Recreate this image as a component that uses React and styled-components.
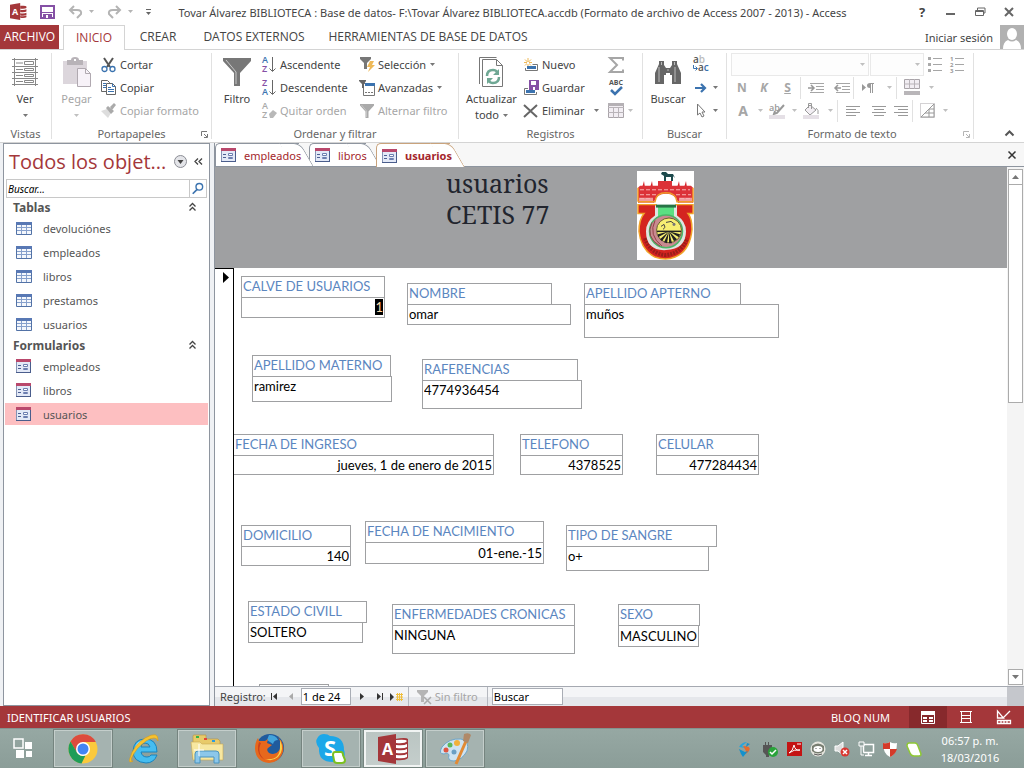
import React, { useEffect, useRef } from 'react';
import styled, { createGlobalStyle, css } from 'styled-components';

const GlobalStyle = createGlobalStyle`
  * { box-sizing: border-box; }
  body { margin: 0; background: #fff; }
  body, button, input, select {
    font-family: "Noto Sans", "Open Sans", sans-serif;
    font-size: 11px;
    color: #444;
  }
  button { background: none; border: 0; padding: 0; margin: 0; white-space: nowrap; }
  svg { display: block; flex: none; overflow: visible; }
`;

const Window = styled.div`
  display: flex;
  flex-direction: column;
  height: 100vh;
  overflow: hidden;
`;

/* ---------- title bar ---------- */

const TitleBar = styled.header`
  display: flex;
  align-items: center;
  flex: none;
  height: 25px;
  padding: 0 8px 0 10px;
`;

const QuickAccess = styled.div`
  display: flex;
  align-items: center;
  gap: 13px;
  width: 155px;
  flex: none;
  margin-top: -2px;
`;

const WindowTitle = styled.h1`
  flex: 1;
  margin: 0;
  font-size: 11px;
  font-weight: 400;
  line-height: 24px;
  text-align: center;
  white-space: nowrap;
`;

const WindowButtons = styled.div`
  display: flex;
  align-items: center;
  gap: 15px;
  margin: -2px 0 0 55px;

  button {
    display: flex;
    justify-content: center;
    width: 14px;
  }

  b { font-size: 13px; }
`;

/* ---------- ribbon tabs ---------- */

const TabStrip = styled.nav`
  display: flex;
  align-items: stretch;
  flex: none;
  height: 25px;
  border-bottom: 1px solid #d4d4d4;
`;

const RibbonTab = styled.button`
  width: ${(p) => p.$width}px;
  font-family: "Open Sans", sans-serif;
  font-size: 12px;
  line-height: 24px;
  text-align: center;

  ${(p) => p.$file && css`
    background: #a4373a;
    color: #fff;
    margin-right: 4px;
  `}

  ${(p) => p.$active && css`
    border: 1px solid #d4d4d4;
    border-bottom: 0;
    background: #fff;
    color: #a4373a;
    margin-bottom: -1px;
  `}
`;

const SignIn = styled.button`
  display: flex;
  align-items: center;
  gap: 7px;
  margin-left: auto;
`;

/* ---------- ribbon ---------- */

const Ribbon = styled.section`
  display: flex;
  flex: none;
  height: 93px;
  padding-top: 3px;
  border-bottom: 1px solid #d4d4d4;
`;

const Group = styled.div`
  display: flex;
  flex-direction: column;
  width: ${(p) => p.$width}px;
  height: 86px;
  padding-left: ${(p) => p.$pad || 0}px;
  border-right: 1px solid #e1e1e1;
`;

const GroupBody = styled.div`
  display: flex;
  flex: none;
  height: 71px;
`;

const GroupLabel = styled.div`
  display: flex;
  justify-content: center;
  position: relative;
  flex: none;
  height: 20px;
  line-height: 20px;
  color: #666;

  svg {
    position: absolute;
    right: 3px;
    top: 7px;
  }
`;

const Column = styled.div`
  display: flex;
  flex-direction: column;
  flex: none;
  height: 71px;
  width: ${(p) => (p.$width ? `${p.$width}px` : 'auto')};
`;

const BigButton = styled.button`
  display: grid;
  grid-template-rows: 38px 16px 16px;
  justify-items: center;
  align-items: center;
  flex: none;
  width: ${(p) => p.$width}px;
  height: 71px;
  line-height: 16px;
  color: ${(p) => (p.$off ? '#a6a6a6' : '#444')};
`;

const ArrowLine = styled.span`
  display: flex;
  align-items: center;
  gap: 4px;
`;

const SmallButton = styled.button`
  display: flex;
  align-items: center;
  gap: 4px;
  height: 23px;
  color: ${(p) => (p.$off ? '#a6a6a6' : '#444')};
`;

const FormatRow = styled.div`
  display: flex;
  align-items: center;
  height: 23px;
`;

const FormatButton = styled.button`
  display: flex;
  align-items: center;
  justify-content: center;
  width: ${(p) => p.$width || 22}px;
  height: 22px;
  font-size: ${(p) => p.$size || 12}px;
  font-weight: 700;
  font-style: ${(p) => (p.$italic ? 'italic' : 'normal')};
  text-decoration: ${(p) => (p.$underline ? 'underline' : 'none')};
  color: #a6a6a6;
`;

const Rule = styled.span`
  width: 1px;
  height: 22px;
  background: #e1e1e1;
`;

const Combo = styled.div`
  position: relative;
  width: ${(p) => p.$width}px;
  margin-right: 1px;

  select {
    display: block;
    appearance: none;
    width: 100%;
    height: 23px;
    border: 1px solid #e1e1e1;
    border-radius: 0;
    background: #fdfdfd;
  }

  svg {
    position: absolute;
    right: 4px;
    top: 10px;
  }
`;

const Collapse = styled.button`
  margin: auto 10px 6px auto;
`;

/* ---------- navigation pane ---------- */

const Workspace = styled.main`
  display: flex;
  flex: 1;
  min-height: 0;
  padding-left: 3px;
  background: #eff1f4;
`;

const Pane = styled.aside`
  display: flex;
  flex-direction: column;
  width: 207px;
  flex: none;
  margin-right: 4px;
  padding: 0 1px;
  border: 1px solid #8e959f;
  background: #fff;
`;

const PaneHeader = styled.div`
  display: flex;
  align-items: center;
  height: 35px;
  padding: 0 5px 0 4px;

  h2 {
    flex: 1;
    margin: 0;
    font: 400 20px/34px "Open Sans", sans-serif;
    color: #a4373a;
    white-space: nowrap;
  }

  button + button { margin-left: 7px; }
`;

const SearchBox = styled.label`
  display: flex;
  align-items: center;
  height: 19px;
  margin: 0 1px;
  border: 1px solid #c8c8c8;

  input {
    flex: 1;
    min-width: 0;
    padding: 0 1px;
    border: 0;
    outline: 0;
    font-size: 10px;
    font-style: italic;
    color: #000;
  }

  input::placeholder { color: #000; opacity: 1; }

  svg {
    padding: 1px;
    border-left: 1px solid #c8c8c8;
  }
`;

const PaneGroup = styled.button`
  display: flex;
  align-items: center;
  justify-content: space-between;
  height: 18px;
  padding: 0 12px 0 8px;
  font-size: 12px;
  font-weight: 700;
  color: #555;
`;

const PaneList = styled.ul`
  margin: 0;
  padding: 0;
  list-style: none;

  li { padding: 1px 0; }
`;

const PaneItem = styled.button`
  display: flex;
  align-items: center;
  gap: 11px;
  width: 100%;
  height: 22px;
  padding-left: 11px;
  color: #555;
  background: ${(p) => (p.$selected ? '#fdbfc1' : 'transparent')};
`;

/* ---------- document area ---------- */

const Documents = styled.div`
  display: flex;
  flex-direction: column;
  flex: 1;
  min-width: 0;
  border-left: 1px solid #8e959f;
`;

const DocumentTabs = styled.div`
  display: flex;
  align-items: stretch;
  flex: none;
  height: 24px;
  padding-right: 8px;
  background: #f7f7f7;
  border-bottom: 1px solid #8e959f;
`;

const DocumentTab = styled.button`
  position: relative;
  z-index: ${(p) => p.$order};
  display: flex;
  align-items: center;
  gap: 8px;
  width: ${(p) => p.$width}px;
  margin-right: 10px;
  padding-left: 5px;
  border: 1px solid ${(p) => (p.$active ? '#c9a37c' : '#8e959f')};
  border-width: 1px 0 0 1px;
  border-radius: 5px 0 0 0;
  background: #fff;
  font-weight: ${(p) => (p.$active ? 700 : 400)};
  color: #a4262c;
  margin-bottom: ${(p) => (p.$active ? -1 : 0)}px;

  &::after {
    content: '';
    position: absolute;
    z-index: -1;
    top: -1px;
    right: -8px;
    bottom: 0;
    width: 20px;
    border: 1px solid ${(p) => (p.$active ? '#c9a37c' : '#8e959f')};
    border-width: 1px 1px 0 0;
    border-radius: 0 7px 0 0;
    background: #fff;
    transform: skewX(30deg);
  }
`;

const CloseDocument = styled.button`
  margin-left: auto;
`;

const FormArea = styled.div`
  display: flex;
  flex: 1;
  min-height: 0;
  background: #fff;
`;

const FormView = styled.div`
  display: flex;
  flex-direction: column;
  flex: 1;
  min-width: 0;
`;

const FormHeader = styled.div`
  display: flex;
  align-items: flex-start;
  flex: none;
  height: 101px;
  padding: 1px 0 0 231px;
  background: #9fa0a2;

  h2 {
    width: 191px;
    margin: 0;
    font: 400 25px/31px "Noto Serif", "Droid Serif", "Liberation Serif", serif;
    color: #22252e;
  }

  svg { margin-top: 3px; }
`;

const FormDetail = styled.div`
  display: flex;
  flex: 1;
  min-height: 0;
`;

const RecordSelector = styled.div`
  width: 19px;
  flex: none;
  padding: 3px 0 0 8px;
  border-top: 1px solid #000;
  border-right: 1px solid #000;
`;

const Record = styled.form`
  flex: 1;
  min-width: 0;
  padding-top: 8px;
  overflow: hidden;
`;

const FieldRow = styled.div`
  display: flex;
  align-items: flex-start;
  height: ${(p) => p.$height}px;
`;

const Field = styled.div`
  display: flex;
  flex-direction: column;
  flex: none;
  margin: ${(p) => p.$drop || 0}px 0 0 ${(p) => p.$before}px;
  font-family: Lato, sans-serif;

  label {
    width: ${(p) => p.$label}px;
    height: 22px;
    padding: 0 1px;
    border: 1px solid #9fa0a2;
    font-size: 13px;
    line-height: 18px;
    color: #5b86bf;
    white-space: nowrap;
  }

  input {
    width: ${(p) => p.$value}px;
    height: ${(p) => p.$height || 21}px;
    margin-top: -1px;
    padding: 0 1px ${(p) => (p.$height > 24 ? p.$height - 20 : 1)}px;
    border: 1px solid #9fa0a2;
    border-radius: 0;
    outline: 0;
    font-family: Lato, sans-serif;
    font-size: 13px;
    text-align: ${(p) => (p.$right ? 'right' : 'left')};
    color: #000;
  }

  input::selection { background: #000; color: #ffd9a8; }
`;

const ScrollBar = styled.div`
  display: flex;
  flex-direction: column;
  width: 17px;
  flex: none;
  padding: 2px 1px 1px;
  background: #f4f4f4;
`;

const ScrollButton = styled.button`
  display: flex;
  align-items: center;
  justify-content: center;
  flex: none;
  height: 16px;
  border: 1px solid #ababab;
  background: #fff;
`;

const ScrollTrack = styled.div`
  flex: 1;
`;

const ScrollThumb = styled.div`
  height: 45%;
  border: 1px solid #ababab;
  border-top: 0;
  background: #fff;
`;

const RecordBar = styled.div`
  display: flex;
  align-items: center;
  flex: none;
  height: 20px;
  padding-left: 5px;
  border-top: 1px solid #a5a9b1;
  background: linear-gradient(#f4f5f7 50%, #e5e7eb 50%);

  input {
    height: 17px;
    padding: 0 1px;
    border: 1px solid #a9adb5;
    border-radius: 0;
    color: #000;
  }
`;

const RecordNumber = styled.input`
  width: 50px;
  margin: 0 3px 0 1px;
`;

const RecordSearch = styled.input`
  width: 71px;
  margin-left: 4px;
`;

const RecordButton = styled.button`
  display: flex;
  justify-content: center;
  width: 17px;
`;

const NoFilter = styled.button`
  display: flex;
  align-items: center;
  gap: 3px;
  height: 19px;
  width: 80px;
  margin-left: 3px;
  padding-left: 8px;
  border: 1px solid #b5b8bf;
  border-width: 0 1px;
  color: #a6a6a6;
`;

const BarCorner = styled.span`
  width: 17px;
  height: 19px;
  margin-left: auto;
  background: #c5c7cc;
`;

/* ---------- status bar ---------- */

const StatusBar = styled.footer`
  display: flex;
  align-items: center;
  flex: none;
  height: 22px;
  padding: 0 1px 0 7px;
  background: #a4373a;
  color: #fff;
`;

const NumLock = styled.span`
  margin-left: auto;
  padding-right: 19px;
`;

const ViewButton = styled.button`
  display: flex;
  align-items: center;
  justify-content: center;
  width: 38px;
  height: 22px;
  background: ${(p) => (p.$active ? '#87292c' : 'none')};
`;

/* ---------- taskbar ---------- */

const Taskbar = styled.div`
  display: flex;
  align-items: stretch;
  flex: none;
  height: 40px;
  border-top: 1px solid #83938f;
  background: linear-gradient(#96a8a3, #8b9d98);
`;

const StartButton = styled.button`
  display: flex;
  align-items: center;
  width: 53px;
  padding-left: 13px;
`;

const TaskButton = styled.button`
  display: flex;
  align-items: center;
  justify-content: center;
  width: 60px;
  margin-right: 2px;
  border: 1px solid transparent;

  ${(p) => p.$open && css`
    border-color: #c4cecb;
    background: #a5b3b0;
    outline: 1px solid #75847f;
    outline-offset: -1px;
    box-shadow: inset 0 0 0 1px #c4cecb;
  `}

  ${(p) => p.$active && css`
    background: linear-gradient(#bac5c2, #c5cecc);
    box-shadow: inset 0 0 0 2px #f1f4f3;
  `}
`;

const Tray = styled.div`
  display: flex;
  align-items: center;
  gap: 8px;
  margin-left: auto;
`;

const Clock = styled.time`
  display: flex;
  flex-direction: column;
  justify-content: center;
  align-items: center;
  width: 102px;
  padding-right: 6px;
  line-height: 17px;
  color: #fff;
`;

/* ---------- drawings ---------- */

const Svg = ({ w = 16, h = 16, box, children, ...rest }) => (
  <svg width={w} height={h} viewBox={box || `0 0 ${w} ${h}`} fill="none" aria-hidden="true" {...rest}>
    {children}
  </svg>
);

const Arrow = ({ color = '#777' }) => (
  <Svg w={5} h={3}><path d="M0 0h5L2.500 3z" fill={color} /></Svg>
);

const AccessLogo = ({ size }) => (
  <Svg w={size} h={size} box="0 0 30 30">
    <path d="M17 4h9q4 0 4 3v16q0 3-4 3h-9z" fill="#fff" />
    <path d="M18 5q10-1 11 1v3q-3 2-11 1zM18 12q8 1 11-1v4q-3 2-11 1zM18 18q8 1 11-1v4q-3 2-11 1zM18 23q8 1 11-1v3q-3 2-11 1z" fill="#a4373a" />
    <path d="M0 3 18 0v30L0 27z" fill="#a4373a" />
    <text x="3.500" y="21" fontFamily="Open Sans, sans-serif" fontWeight="700" fontSize="16" fill="#fff">A</text>
  </Svg>
);

// desktop size: the discs are white with red gaps
const AccessAppIcon = () => (
  <Svg w={30} h={30}>
    <path d="M17 5q11-2 13 0v19q-3 3-13 2z" fill="#a4373a" />
    <path d="M18 6q10-1 11 1-2 3-11 2zM18 11q8 1 11-1v3q-3 2-11 1zM18 16q8 1 11-1v3q-3 2-11 1zM18 21q8 1 11-1v3q-3 2-11 1z" fill="#fff" />
    <path d="M0 3 18 0v30L0 27z" fill="#a4373a" />
    <text x="4" y="21" fontFamily="Open Sans, sans-serif" fontWeight="700" fontSize="16" fill="#fff">A</text>
  </Svg>
);

const SaveIcon = () => (
  <Svg w={15} h={14}>
    <path d="M1 1h13v12H1z" fill="#fff" stroke="#8550a5" strokeWidth="2" />
    <path d="M2 7h11v1H2zM3 9h9v4H3z" fill="#8550a5" />
    <path d="M6 10h2v3H6z" fill="#fff" />
  </Svg>
);

const UndoIcon = ({ flip }) => (
  <Svg w={26} h={14}>
    <g transform={flip ? 'translate(15 0) scale(-1 1)' : undefined} stroke="#b4b4b4" strokeWidth="2">
      <path d="M6 1 2 5l4 4M2 5h7q5 0 4 4l-4 4" />
    </g>
    <path d="M21 5h5l-2.500 3z" fill="#b4b4b4" />
  </Svg>
);

const ViewIcon = () => (
  <Svg w={26} h={28}>
    <path d="M2.500 0v28M23.500 0v28M0 1.500h26M0 8.500h26M0 14.500h26M0 20.500h26M0 26.500h26" stroke="#888" />
    <path d="M4 5h7M4 11.500h7M4 17.500h7M4 23.500h7" stroke="#888" />
    <path d="M12.500 3.500h9v3h-9zM12.500 10.500h9v2h-9zM12.500 16.500h9v2h-9zM12.500 22.500h9v2h-9z" stroke="#888" fill="#fff" />
  </Svg>
);

const PasteIcon = () => (
  <Svg w={28} h={30}>
    <path d="M0 4h24v23H0z" fill="#dcd6dc" />
    <path d="M4 8V3h4q0-3 4-3t4 3h4v5z" fill="#b8b3b8" />
    <path d="M11 2h2v2h-2z" fill="#fff" />
    <path d="M14.500 11.500h8l5 5v13h-13z" fill="#f7f2f8" stroke="#b0a9b0" />
    <path d="M22.500 11.500v5h5" stroke="#b0a9b0" />
  </Svg>
);

const CutIcon = () => (
  <Svg w={15} h={16}>
    <path d="m3 1 6 9M12 1 6 10" stroke="#555" strokeWidth="2" />
    <circle cx="3.500" cy="12" r="2.500" stroke="#3b73af" strokeWidth="1.300" />
    <circle cx="11.500" cy="12" r="2.500" stroke="#3b73af" strokeWidth="1.300" />
  </Svg>
);

const CopyIcon = () => (
  <Svg w={15} h={15}>
    <path d="M.5.500h6l2 2v9h-8z" fill="#fff" stroke="#666" />
    <path d="M2 3.500h3M2 5.500h3M2 7.500h3" stroke="#3b73af" />
    <path d="M5.500 3.500h6l3 3v8h-9z" fill="#fff" stroke="#666" />
    <path d="M11.500 3.500v3h3M7 7.500h3M7 9.500h6M7 11.500h6" stroke="#3b73af" />
  </Svg>
);

const BrushIcon = () => (
  <Svg w={15} h={15}>
    <path d="M0 8 6 6l4 4-3 5z" fill="#ddd" />
    <path d="m5 5 2-2 6 5-3 3z" fill="#aaa" />
    <path d="m9 4 4-4 2 2-4 5z" fill="#aaa" />
  </Svg>
);

const FunnelIcon = ({ w, h, color }) => (
  <Svg w={w} h={h} box="0 0 28 28" preserveAspectRatio="none">
    <path d="M0 0h28v3L17 15v13h-6V15L0 3z" fill={color} />
    <path d="M3 2l10 12v12" stroke="#fff" strokeOpacity=".6" />
  </Svg>
);

const SortIcon = ({ top, bottom, topColor, bottomColor, arrow = true }) => (
  <Svg w={14} h={17}>
    <g fontFamily="Open Sans, sans-serif" fontSize="9" fontWeight="600">
      <text x="0" y="7" fill={topColor}>{top}</text>
      <text x="0" y="16" fill={bottomColor}>{bottom}</text>
    </g>
    {arrow
      ? <path d="M10.500 1v14M7.500 12.500l3 3 3-3" stroke="#666" />
      : <path d="m7 12 4-4 4 3-4 5H8z" fill="#b8b8b8" />}
  </Svg>
);

const SelectionIcon = () => (
  <Svg w={14} h={15}>
    <path d="M0 0h11v2L7 6v6H4V6L0 2z" fill="#777" />
    <path d="M10 4h4l-2 4h3l-7 7 2-5H7z" fill="#eeb958" />
  </Svg>
);

const AdvancedIcon = () => (
  <Svg w={14} h={16}>
    <path d="M3.500 3.500h11v12h-11z" fill="#fff" stroke="#777" />
    <path d="M5 3h10v3H5z" fill="#3b73af" />
    <path d="M-1 0h7v1L4 4v4H2V4L-1 1z" fill="#666" />
    <path d="M5 12h2v1H5zM8 12h2v1H8zM11 12h2v1h-2z" fill="#777" />
  </Svg>
);

const RefreshIcon = () => (
  <Svg w={25} h={30}>
    <path d="M.5 27V.5h17" stroke="#777" />
    <path d="M3.500 2.500h14l6 6v21h-20z" fill="#fff" stroke="#777" />
    <path d="M17.500 2.500v6h6" stroke="#777" />
    <path d="M8 19q0-6 6-6 3 0 4 2M20 20q0 6-6 6-3 0-4-2" stroke="#6fa894" strokeWidth="2.500" />
    <path d="M20 12v6h-6zM8 27v-6h6z" fill="#6fa894" />
  </Svg>
);

const NewIcon = () => (
  <Svg w={14} h={14}>
    <path d="M4 0v9M0 4.500h8M1 1.500l6 6M7 1.500l-6 6" stroke="#eeb958" />
    <path d="M3 4h2v2H3z" fill="#fff" />
    <path d="M8.500 6.500h5v6H1.500V10" stroke="#777" />
    <path d="M3 8h9v3H3z" fill="#3b73af" />
  </Svg>
);

const SaveRecordIcon = () => (
  <Svg w={14} h={16}>
    <path d="M4 8.500H.5v6h12V12" stroke="#777" />
    <path d="M2 10h9v3H2z" fill="#3b73af" />
    <path d="M5 0h10v10H5z" fill="#8550a5" />
    <path d="M7 1h5v4H7z" fill="#fff" />
    <path d="M9 7h2v3H9z" fill="#fff" />
  </Svg>
);

const DeleteIcon = () => (
  <Svg w={14} h={14}>
    <path d="m0 1 13 12M13 1 0 13" stroke="#666" strokeWidth="2" />
  </Svg>
);

const SigmaIcon = () => (
  <Svg w={16} h={16}>
    <path d="M15 3.500V1H2l7 7-7 7h13v-2.500" stroke="#a6a6a6" strokeWidth="2" />
  </Svg>
);

const SpellIcon = () => (
  <Svg w={16} h={17}>
    <text x="1" y="6" fontFamily="Open Sans, sans-serif" fontSize="7" fontWeight="700" fill="#555">ABC</text>
    <path d="m3 11 4 4 7-7" stroke="#3b73af" strokeWidth="2.500" />
  </Svg>
);

const GridIcon = ({ bar }) => (
  <Svg w={16} h={bar ? 17 : 15}>
    <path d={bar ? 'M.5.500h15v9H.5z' : 'M.5.500h15v14H.5z'} fill="#f2eef3" stroke="#a9a4a9" />
    <path d={bar ? 'M0 5h16M5.500 0v10M10.500 0v10' : 'M0 4.500h16M0 9.500h16M5.500 5v10M10.500 5v10'} stroke="#b9b4b9" />
    {bar ? <path d="M0 12h16v4H0z" fill="#b9b6b9" /> : <path d="M0 0h16v3H0z" fill="#b5b1b5" />}
  </Svg>
);

const BinocularsIcon = () => (
  <Svg w={26} h={24}>
    <path d="M4 4V1h5v4l2 3h4l2-3V1h5v3l4 9v11h-9v-9h-2v-2h-4v2H9v9H0V13z" fill="#666" />
    <path d="M4 7v15M20 7v15M6.500 2v3M19.500 2v3M12 10h2" stroke="#bbb" />
  </Svg>
);

const ReplaceIcon = () => (
  <Svg w={17} h={17}>
    <g fontFamily="Open Sans, sans-serif" fontSize="10" fontWeight="600">
      <text x="0" y="7" fill="#555">a<tspan fill="#bbb">b</tspan></text>
      <text x="5" y="15" fill="#555">a<tspan fill="#3b73af">c</tspan></text>
    </g>
    <path d="M.5 9v3.500H4M2.500 10.500l2 2-2 2" stroke="#3b73af" />
  </Svg>
);

const GotoIcon = () => (
  <Svg w={16} h={10}><path d="M2 5h10M8 1l4 4-4 4" stroke="#3b73af" strokeWidth="2.200" /></Svg>
);

const CursorIcon = () => (
  <Svg w={16} h={15}><path d="M4.500 1v11l2.500-2 2 4 2-1-2-4h3z" fill="#fff" stroke="#777" /></Svg>
);

const ListIcon = ({ numbered }) => (
  <Svg w={16} h={17}>
    <path d="M5 2.500h9M5 8.500h9M5 14.500h9" stroke="#a6a6a6" />
    {numbered ? (
      <g fontFamily="Open Sans, sans-serif" fontSize="6" fill="#999">
        <text x="0" y="5">1</text><text x="0" y="11">2</text><text x="0" y="17">3</text>
      </g>
    ) : <path d="M0 1h3v3H0zM0 7h3v3H0zM0 13h3v3H0z" fill="#aaa" />}
  </Svg>
);

const IndentIcon = ({ back }) => (
  <Svg w={16} h={12}>
    <path d="M2 1.500h14M8 4.500h8M8 7.500h8M2 10.500h14" stroke="#a6a6a6" />
    <path d={back ? 'M7 6H1M4 3 1 6l3 3' : 'M0 6h6M3 3l3 3-3 3'} stroke="#999" strokeWidth="1.500" />
  </Svg>
);

const ParagraphIcon = () => (
  <Svg w={12} h={10}>
    <path d="M0 1v7l4-3.500zM8 0h4v1h-1v9h-1V1H9v9H8V5q-3 0-3-2.500T8 0z" fill="#999" />
  </Svg>
);

const HighlightIcon = () => (
  <Svg w={16} h={16}>
    <text x="0" y="8" fontFamily="Open Sans, sans-serif" fontSize="9" fontWeight="600" fill="#999">ab</text>
    <path d="M15 2 8 10l-3 1 1-3" stroke="#999" strokeWidth="2" />
    <path d="M0 12h16v4H0z" fill="#e5e0e6" />
  </Svg>
);

const FillIcon = () => (
  <Svg w={16} h={16}>
    <path d="m7 2 6 5-6 5-5-5z" fill="#f2eef3" stroke="#999" />
    <path d="M5.500 5V.5h3V6M13 5q3 2 2 6" stroke="#999" />
    <path d="M0 12h16v4H0z" fill="#e5e0e6" />
  </Svg>
);

const alignLines = {
  left: 'M0 .5h14M0 3.500h10M0 6.500h14M0 9.500h10',
  center: 'M0 .5h14M2 3.500h10M0 6.500h14M2 9.500h10',
  right: 'M0 .5h14M4 3.500h10M0 6.500h14M4 9.500h10',
};

const AlignIcon = ({ kind }) => (
  <Svg w={14} h={10}><path d={alignLines[kind]} stroke="#999" /></Svg>
);

const ConditionalIcon = () => (
  <Svg w={15} h={15}>
    <path d="M.5.500h14v14H.5z" stroke="#a9a4a9" strokeDasharray="1 1" />
    <path d="M1 14 14 1v13zM5 10h9M9 6v8M9 6h5" stroke="#999" />
  </Svg>
);

const LauncherIcon = ({ color = '#777' }) => (
  <Svg w={7} h={7}><path d="M.5 5V.5H6M3 3l3 3M6.500 3v3.500H3" stroke={color} /></Svg>
);

const AvatarIcon = () => (
  <Svg w={24} h={24}>
    <path d="M0 0h24v24H0z" fill="#b1b1b1" />
    <ellipse cx="12" cy="9" rx="5" ry="6" fill="#fff" />
    <path d="M3 24q0-7 5-9 4 3 8 0 5 2 5 9z" fill="#fff" />
  </Svg>
);

const TableIcon = () => (
  <Svg w={16} h={13}>
    <path d="M.5.500h15v12H.5z" fill="#f4f7fc" stroke="#5272a6" />
    <path d="M0 0h16v3H0z" fill="#5878b4" />
    <path d="M1 5.500h14M1 8.500h14M5.500 3v9M10.500 3v9" stroke="#86a0cc" />
  </Svg>
);

const FormIcon = () => (
  <Svg w={15} h={14}>
    <path d="M.5.500h14v13H.5z" fill="#e3e9f7" stroke="#8593b5" />
    <path d="M0 13h15v1H0zM14 3h1v11h-1z" fill="#4a5d8c" />
    <path d="M0 0h15v3H0z" fill="#b9486c" />
    <path d="M2 6.500h3M2 9.500h3" stroke="#4c5f92" />
    <path d="M7.500 5.500h4v2h-4zM7.500 9.500h4v1h-4z" fill="#fff" stroke="#6c7fb0" />
  </Svg>
);

const MagnifierIcon = () => (
  <Svg w={17} h={17} box="-1 0 16 16">
    <circle cx="8.500" cy="6" r="3.800" stroke="#3b73af" strokeWidth="1.600" />
    <path d="m6 9-5 5" stroke="#3b73af" strokeWidth="2" />
  </Svg>
);

const DoubleUp = () => (
  <Svg w={7} h={8}><path d="m.5 3.500 3-3 3 3M.5 7.500l3-3 3 3" stroke="#444" strokeWidth="1.300" /></Svg>
);

const SchoolCrest = () => (
  <Svg w={57} h={89} box="0 0 57 90" preserveAspectRatio="none">
    <path d="M0 0h57v90H0z" fill="#fff" />
    <path d="M25 1h4l2 2h5l2 4-2-2v5h-2V6h-5v4h-2V5l-3-2z" fill="#1d4a4d" />
    <path d="M5 17l2-7 1 7M13 17l2-7 1 7M40 17l2-7 1 7M47 17l2-7 1 7" fill="#d8262c" />
    <path d="M21 10h14v6H21zM1 17l2-2h51l2 2v15H41q-2-9-12-9t-12 9H1z" fill="#dc3238" />
    <path d="M2 27h14v5H2zM42 27h13v5H42z" fill="#f0999b" />
    <path d="M3 19h50M3 24h16M39 24h15M3 28h12M43 28h11" stroke="#f7b5b5" strokeDasharray="4 2" />
    <path d="M1 31h17q1-9 11-9t11 9h16V17M1 31V17" stroke="#ef9a29" strokeWidth="1.500" />
    <path d="M1 34h18v10h20V34h17v9h-5q4 5 4 16-2 22-17 28-9 4-20 0Q4 80 2 61q0-12 5-18H1z" fill="#d42420" stroke="#f0a32a" strokeWidth="1.500" />
    <path d="M8 68q5 15 20 17 16-1 22-17" stroke="#9c1d1a" strokeWidth="4" strokeDasharray="2 1" />
    <path d="M18 35h22v10q9 6 9 16 0 18-20 19T9 61q0-10 9-16z" fill="#dfe5e2" />
    <path d="M21 35h16v12h-16z" fill="#5be082" />
    <path d="M19 34h20v3H19z" fill="#277346" />
    <circle cx="29" cy="61" r="16.500" fill="#c98a90" stroke="#4cb567" strokeWidth="1.500" />
    <path d="M15 52q-7 15 8 24M18 50q-7 15 7 26" stroke="#914048" />
    <circle cx="32" cy="60" r="12.500" fill="#f6ee72" stroke="#665f30" />
    <path d="M20 61h24" stroke="#222" strokeWidth="1.500" />
    <path d="M32 61 21 64v3zM32 61l-9 8 2 2zM32 61l-5 11 3 1zM32 61v12h3zM32 61l5 10 3-2zM32 61l10 6 1-3z" fill="#222" />
    <path d="m24 56 3-2 1 3-2 2M29 52l5-1 4 3" stroke="#444" />
    <circle cx="37" cy="54" r="1.500" fill="#777" />
  </Svg>
);

const ChromeIcon = () => (
  <Svg w={30} h={30}>
    <circle cx="15" cy="15" r="14.500" fill="#fbc93c" />
    <path d="M2.500 7.500A14.500 14.500 0 0 1 27.800 8H15L9 19z" fill="#dd4b3e" />
    <path d="M2.500 7.500 9 18.500q3 4.500 8.500 3L13.500 29.400A14.500 14.500 0 0 1 2.500 7.500z" fill="#1f9d58" />
    <circle cx="15" cy="15" r="7" fill="#fff" />
    <circle cx="15" cy="15" r="5.500" fill="#4285f4" />
  </Svg>
);

const ExplorerIcon = () => (
  <Svg w={32} h={32}>
    <path d="M28 19H12q1 5 6 5 3 0 4-2h6q-3 8-11 8Q4 29 4 18 5 6 16 6q12 0 12 13zm-7-5q-1-4-5-4t-4 4z" fill="#45bdf0" stroke="#1983bd" />
    <path d="M7 15q2-6 8-7" stroke="#b8eaff" strokeWidth="2" />
    <path d="M4 28q-5 3-3-3Q4 13 16 5q14-8 13 3-2-6-12 0Q7 15 3 24q-2 5 1 4z" fill="#f6c22f" stroke="#d99b18" strokeWidth=".6" />
  </Svg>
);

const FolderIcon = () => (
  <Svg w={32} h={30}>
    <path d="M2 2q0-1 1-1h12v4h12l2 2v18H2z" fill="#e8ca6a" stroke="#b4923e" strokeWidth=".6" />
    <path d="M5 2h3v2H5z" fill="#35b34a" /><path d="M13 4h3v2h-3z" fill="#e2443a" /><path d="M21 6h3v2h-3z" fill="#2b9ce0" />
    <path d="M0 8h9l2 2h21v16H2z" fill="#f7e7a0" stroke="#c7a854" strokeWidth=".6" />
    <path d="M4 29V20q0-3 3-3h18q3 0 3 3v9h-5v-6H9v6z" fill="#8cc7ea" stroke="#4b93bf" />
    <path d="M8 10v12M3 16h10" stroke="#fff" />
  </Svg>
);

const FirefoxIcon = () => (
  <Svg w={31} h={31}>
    <circle cx="16" cy="15" r="14" fill="#205b9d" />
    <path d="M15 2q7 0 9 5-4 0-5 4l-6-4z" fill="#43a4db" />
    <path d="M24 4q7 7 5 15-3 10-14 11Q2 29 1 16 1 9 4 5l1 3 6 0 3-2-1 4 5 2-4 3q-2 2 1 5 7 3 11-4 2-6-2-12z" fill="#e7681c" />
    <path d="M26 7q5 10-2 17-6 5-13 2 15 2 15-12z" fill="#fbd34b" />
    <path d="M5 9q-3 9 2 15l5 4Q2 20 7 10z" fill="#c9411c" />
  </Svg>
);

const SkypeIcon = () => (
  <Svg w={30} h={30}>
    <path d="M8 0q4 0 6 2 14 0 14 14 2 5-1 9-4 5-10 3Q2 28 3 14-2 8 2 3q2-3 6-3z" fill="#1ca7e8" />
    <text x="8" y="22" fontFamily="Open Sans, sans-serif" fontSize="22" fontWeight="700" fill="#fff">S</text>
    <path d="M19 18h6q2 0 2 3l2 5q0 3-3 3h-5q-3 0-3-3l-1-5q0-3 2-3z" fill="#fff" stroke="#7cc022" strokeWidth="2" />
  </Svg>
);

const PaintIcon = () => (
  <Svg w={32} h={32}>
    <path d="M3 14Q10 5 22 6q9 2 6 12-5 9-13 10-7 0-5-6-1-3-5-1-6 0-2-7z" fill="#cfe3f1" stroke="#6ea6ca" />
    <circle cx="7" cy="17" r="2.500" fill="#df5540" /><circle cx="11" cy="12" r="2.500" fill="#5bb75b" />
    <circle cx="18" cy="10" r="3" fill="#f2b13a" /><circle cx="15" cy="19" r="2.500" fill="#6b9fc4" />
    <path d="M27 8 17 31" stroke="#e18a35" strokeWidth="3" />
    <path d="M25 1q5-2 7 1l-3 8-5-2z" fill="#b08968" />
  </Svg>
);

const StartIcon = () => (
  <Svg w={21} h={21}>
    <path d="M1 1h9v9H1z" stroke="#fff" strokeWidth="1.500" />
    <path d="M12 4h7v7h-7zM3 12h8v8H3zM13 13h6v6h-6z" fill="#fff" />
  </Svg>
);

const trayIcons = [
  <><path d="M9 1 4 5l3 2-6-1q3-5 8-5z" fill="#27a5dd" /><path d="M5 5q9 0 6 5t-9 2q5 1 6-2z" fill="#e66b2c" /><path d="M1 8l6 3 3-1-5 6-2-3zM9 2l3 1-4 3z" fill="#1491cc" /></>,
  <><path d="M3 1h1v3h2V1h1v3h3v7l-3 3v2H4v-2L1 11V4h2z" fill="#555" /><circle cx="11" cy="11" r="5" fill="#29a33b" /><path d="m8 11 2 2 4-4" stroke="#fff" strokeWidth="1.500" /></>,
  <><path d="M1 1h15v14H1z" fill="#c41313" /><path d="M3 12q4-2 5-8 1 6 6 5-6-1-11 3M11 3h4" stroke="#fff" /></>,
  <><circle cx="8" cy="8" r="7.500" fill="#e6e6df" /><path d="M2 5q6-5 12 0v5q-6 5-12 0z" fill="#777d70" /><ellipse cx="8" cy="8" rx="4.500" ry="3" fill="#fff" /><path d="M6 7v1M10 7v1M4 13q4 2 8 0" stroke="#555" /></>,
  <><path d="M1 5h3l5-4v13l-5-4H1z" fill="#ddd" stroke="#fff" /><circle cx="11" cy="11" r="4.500" fill="#d93731" /><path d="m9 9 4 4M13 9l-4 4" stroke="#fff" strokeWidth="1.500" /></>,
  <><path d="M5.500 3.500h10v8h-10zM7 14.500h7M10.500 12v3" stroke="#fff" strokeWidth="1.500" /><path d="M1 1h5v4H1zM3 5v9h3" fill="#91a29e" stroke="#fff" /></>,
  <><path d="M8 1q3 2 7 1 0 11-7 14Q1 13 1 2q4 1 7-1z" fill="#fff" /><path d="M8 1v7H1V2q4 1 7-1zM8 8h7q-2 6-7 8z" fill="#d43a2a" /></>,
  <><path d="M3 2h6q2 0 3 3l3 8q0 2-2 2H8q-3 0-4-3L1 5q0-3 2-3z" fill="#fff" stroke="#8fc836" strokeWidth="1.500" /></>,
];

/* ---------- data ---------- */

const tables = ['devoluciónes', 'empleados', 'libros', 'prestamos', 'usuarios'];
const forms = ['empleados', 'libros', 'usuarios'];

const rows = [
  { height: 79, fields: [
    { name: 'CALVE DE USUARIOS', text: '1', before: 7, label: 144, value: 144, right: true },
    { name: 'NOMBRE', text: 'omar', before: 22, drop: 7, label: 145, value: 164 },
    { name: 'APELLIDO APTERNO', text: 'muños', before: 13, drop: 7, label: 157, value: 195, height: 34 },
  ] },
  { height: 79, fields: [
    { name: 'APELLIDO MATERNO', text: 'ramirez', before: 18, label: 139, value: 140, height: 26 },
    { name: 'RAFERENCIAS', text: '4774936454', before: 30, drop: 4, label: 156, value: 160, height: 29 },
  ] },
  { height: 87, fields: [
    { name: 'FECHA DE INGRESO', text: 'jueves, 1 de enero de 2015', before: -1, label: 261, value: 261, height: 20, right: true },
    { name: 'TELEFONO', text: '4378525', before: 26, label: 103, value: 103, height: 20, right: true },
    { name: 'CELULAR', text: '477284434', before: 33, label: 103, value: 103, height: 20, right: true },
  ] },
  { height: 80, fields: [
    { name: 'DOMICILIO', text: '140', before: 7, drop: 4, label: 110, value: 110, height: 20, right: true },
    { name: 'FECHA DE NACIMIENTO', text: '01-ene.-15', before: 14, label: 179, value: 179, height: 22, right: true },
    { name: 'TIPO DE SANGRE', text: 'o+', before: 22, drop: 4, label: 151, value: 143, height: 25 },
  ] },
  { height: 83, fields: [
    { name: 'ESTADO CIVILL', text: 'SOLTERO', before: 14, label: 119, value: 115 },
    { name: 'ENFERMEDADES CRONICAS', text: 'NINGUNA', before: 25, drop: 3, label: 183, value: 183, height: 29 },
    { name: 'SEXO', text: 'MASCULINO', before: 43, drop: 3, label: 82, value: 81, height: 22 },
  ] },
  { height: 24, fields: [
    { name: '', text: '', before: 25, label: 70, value: 70 },
  ] },
];

const off = '#c0c0c0';

const RibbonGroups = () => (
  <Ribbon>
    <Group $width={52}>
      <GroupBody>
        <BigButton $width={50}><ViewIcon />Ver<ArrowLine><Arrow /></ArrowLine></BigButton>
      </GroupBody>
      <GroupLabel>Vistas</GroupLabel>
    </Group>

    <Group $width={160}>
      <GroupBody>
        <BigButton $width={49} $off><PasteIcon />Pegar<ArrowLine><Arrow color={off} /></ArrowLine></BigButton>
        <Column>
          <SmallButton><CutIcon />Cortar</SmallButton>
          <SmallButton><CopyIcon />Copiar</SmallButton>
          <SmallButton $off><BrushIcon />Copiar formato</SmallButton>
        </Column>
      </GroupBody>
      <GroupLabel>Portapapeles<LauncherIcon /></GroupLabel>
    </Group>

    <Group $width={247}>
      <GroupBody>
        <BigButton $width={50}><FunnelIcon w={28} h={28} color="#777" />Filtro</BigButton>
        <Column $width={98}>
          <SmallButton><SortIcon top="A" bottom="Z" topColor="#3b73af" bottomColor="#8550a5" />Ascendente</SmallButton>
          <SmallButton><SortIcon top="Z" bottom="A" topColor="#8550a5" bottomColor="#3b73af" />Descendente</SmallButton>
          <SmallButton $off><SortIcon top="A" bottom="Z" topColor="#aaa" bottomColor="#aaa" arrow={false} />Quitar orden</SmallButton>
        </Column>
        <Column>
          <SmallButton><SelectionIcon />Selección<Arrow /></SmallButton>
          <SmallButton><AdvancedIcon />Avanzadas<Arrow /></SmallButton>
          <SmallButton $off><FunnelIcon w={14} h={14} color="#aaa" />Alternar filtro</SmallButton>
        </Column>
      </GroupBody>
      <GroupLabel>Ordenar y filtrar</GroupLabel>
    </Group>

    <Group $width={184}>
      <GroupBody>
        <BigButton $width={65}><RefreshIcon />Actualizar<ArrowLine>todo<Arrow /></ArrowLine></BigButton>
        <Column $width={84}>
          <SmallButton><NewIcon />Nuevo</SmallButton>
          <SmallButton><SaveRecordIcon />Guardar</SmallButton>
          <SmallButton><DeleteIcon />Eliminar<Svg w={2} h={4} /><Arrow /></SmallButton>
        </Column>
        <Column>
          <SmallButton aria-label="Totales"><SigmaIcon /></SmallButton>
          <SmallButton aria-label="Revisión ortográfica"><SpellIcon /></SmallButton>
          <SmallButton aria-label="Más"><GridIcon /><Arrow color={off} /></SmallButton>
        </Column>
      </GroupBody>
      <GroupLabel>Registros</GroupLabel>
    </Group>

    <Group $width={84}>
      <GroupBody>
        <BigButton $width={50}><BinocularsIcon />Buscar</BigButton>
        <Column>
          <SmallButton aria-label="Reemplazar"><ReplaceIcon /></SmallButton>
          <SmallButton aria-label="Ir a"><GotoIcon /><Arrow /></SmallButton>
          <SmallButton aria-label="Seleccionar"><CursorIcon /><Arrow /></SmallButton>
        </Column>
      </GroupBody>
      <GroupLabel>Buscar</GroupLabel>
    </Group>

    <Group $width={247} $pad={4}>
      <Column>
        <FormatRow>
          <Combo $width={138}><select aria-label="Fuente" disabled /><Arrow color={off} /></Combo>
          <Combo $width={54}><select aria-label="Tamaño de fuente" disabled /><Arrow color={off} /></Combo>
          <FormatButton aria-label="Viñetas"><ListIcon /></FormatButton>
          <FormatButton aria-label="Numeración"><ListIcon numbered /></FormatButton>
        </FormatRow>
        <FormatRow>
          <FormatButton>N</FormatButton>
          <FormatButton $italic>K</FormatButton>
          <FormatButton $width={25} $underline>S</FormatButton>
          <Rule />
          <FormatButton $width={30} aria-label="Aumentar sangría"><IndentIcon /></FormatButton>
          <FormatButton aria-label="Reducir sangría"><IndentIcon back /></FormatButton>
          <Rule />
          <FormatButton $width={28} aria-label="Dirección"><ParagraphIcon /></FormatButton>
          <FormatButton $width={14} aria-label="Más direcciones"><Arrow color={off} /></FormatButton>
          <Rule />
          <FormatButton $width={30} aria-label="Cuadrícula"><GridIcon bar /></FormatButton>
          <FormatButton $width={8} aria-label="Más cuadrículas"><Arrow color={off} /></FormatButton>
        </FormatRow>
        <FormatRow>
          <FormatButton $width={24} $size={14}>A</FormatButton>
          <FormatButton $width={10} aria-label="Más colores"><Arrow color={off} /></FormatButton>
          <FormatButton $width={24} aria-label="Resaltado"><HighlightIcon /></FormatButton>
          <FormatButton $width={10} aria-label="Más resaltados"><Arrow color={off} /></FormatButton>
          <FormatButton $width={24} aria-label="Relleno"><FillIcon /></FormatButton>
          <FormatButton $width={14} aria-label="Más rellenos"><Arrow color={off} /></FormatButton>
          <Rule />
          <FormatButton $width={30} aria-label="Izquierda"><AlignIcon kind="left" /></FormatButton>
          <FormatButton aria-label="Centrar"><AlignIcon kind="center" /></FormatButton>
          <FormatButton aria-label="Derecha"><AlignIcon kind="right" /></FormatButton>
          <Rule />
          <FormatButton $width={28} aria-label="Formato alternativo"><ConditionalIcon /></FormatButton>
          <FormatButton $width={8} aria-label="Más formatos"><Arrow color={off} /></FormatButton>
        </FormatRow>
      </Column>
      <GroupLabel>Formato de texto<LauncherIcon color="#b5b5b5" /></GroupLabel>
    </Group>

    <Collapse aria-label="Contraer la cinta"><Svg w={9} h={5}><path d="m.5 4.500 4-4 4 4" stroke="#555" strokeWidth="2" /></Svg></Collapse>
  </Ribbon>
);

const NavigationPane = () => (
  <Pane>
    <PaneHeader>
      <h2>Todos los objet...</h2>
      <button aria-label="Filtrar objetos">
        <Svg w={13} h={13}>
          <circle cx="6.500" cy="6.500" r="6" fill="#e4e5e9" stroke="#8b8d95" />
          <path d="M3.500 5h6l-3 4z" fill="#444" />
        </Svg>
      </button>
      <button aria-label="Contraer panel">
        <Svg w={9} h={7}><path d="m4 .500-3 3 3 3M8 .500l-3 3 3 3" stroke="#444" strokeWidth="1.300" /></Svg>
      </button>
    </PaneHeader>
    <SearchBox>
      <input aria-label="Buscar objetos" placeholder="Buscar..." />
      <MagnifierIcon />
    </SearchBox>
    <PaneGroup>Tablas<DoubleUp /></PaneGroup>
    <PaneList>
      {tables.map((name) => (
        <li key={name}><PaneItem><TableIcon />{name}</PaneItem></li>
      ))}
    </PaneList>
    <PaneGroup>Formularios<DoubleUp /></PaneGroup>
    <PaneList>
      {forms.map((name) => (
        <li key={name}><PaneItem $selected={name === 'usuarios'}><Svg w={16} h={14}><FormIcon /></Svg>{name}</PaneItem></li>
      ))}
    </PaneList>
  </Pane>
);

const UserForm = () => {
  const first = useRef(null);

  useEffect(() => {
    first.current.focus();
    first.current.select();
  }, []);

  return (
    <FormView>
      <FormHeader>
        <h2>usuarios<br />CETIS 77</h2>
        <SchoolCrest />
      </FormHeader>
      <FormDetail>
        <RecordSelector><Svg w={6} h={11}><path d="M0 0v11l6-5.500z" fill="#000" /></Svg></RecordSelector>
        <Record>
          {rows.map((row, r) => (
            <FieldRow key={r} $height={row.height}>
              {row.fields.map((f, i) => (
                <Field
                  key={f.name}
                  $before={f.before}
                  $drop={f.drop}
                  $label={f.label}
                  $value={f.value}
                  $height={f.height}
                  $right={f.right}
                >
                  <label htmlFor={`field-${r}-${i}`}>{f.name}</label>
                  <input id={`field-${r}-${i}`} ref={r + i === 0 ? first : null} defaultValue={f.text} />
                </Field>
              ))}
            </FieldRow>
          ))}
        </Record>
      </FormDetail>
    </FormView>
  );
};

const App = () => (
  <Window>
    <GlobalStyle />
    <TitleBar>
      <QuickAccess>
        <AccessLogo size={17} />
        <button aria-label="Guardar"><SaveIcon /></button>
        <button aria-label="Deshacer"><UndoIcon /></button>
        <button aria-label="Rehacer"><UndoIcon flip /></button>
        <button aria-label="Personalizar"><Svg w={5} h={6}><path d="M0 .5h5" stroke="#666" /><path d="M0 3h5L2.500 6z" fill="#666" /></Svg></button>
      </QuickAccess>
      <WindowTitle>Tovar Álvarez BIBLIOTECA : Base de datos- F:\Tovar Álvarez BIBLIOTECA.accdb (Formato de archivo de Access 2007 - 2013) - Access</WindowTitle>
      <WindowButtons>
        <button aria-label="Ayuda"><b>?</b></button>
        <button aria-label="Minimizar"><Svg w={10} h={10}><path d="M0 7h9" stroke="#666" strokeWidth="2" /></Svg></button>
        <button aria-label="Restaurar"><Svg w={11} h={10}><path d="M2.500 3V1H10v5H8" stroke="#666" /><path d="M.5 3.500h8v5h-8zM0 4.500h8" stroke="#666" /></Svg></button>
        <button aria-label="Cerrar"><Svg w={10} h={10}><path d="m1 1 8 8M9 1 1 9" stroke="#666" strokeWidth="2" /></Svg></button>
      </WindowButtons>
    </TitleBar>

    <TabStrip>
      <RibbonTab $file $width={59}>ARCHIVO</RibbonTab>
      <RibbonTab $active $width={62}>INICIO</RibbonTab>
      <RibbonTab $width={66}>CREAR</RibbonTab>
      <RibbonTab $width={126}>DATOS EXTERNOS</RibbonTab>
      <RibbonTab $width={222}>HERRAMIENTAS DE BASE DE DATOS</RibbonTab>
      <SignIn>Iniciar sesión<AvatarIcon /></SignIn>
    </TabStrip>

    <RibbonGroups />

    <Workspace>
      <NavigationPane />
      <Documents>
        <DocumentTabs>
          <DocumentTab $width={84} $order={2}><FormIcon />empleados</DocumentTab>
          <DocumentTab $width={57} $order={1}><FormIcon />libros</DocumentTab>
          <DocumentTab $width={74} $order={3} $active><FormIcon />usuarios</DocumentTab>
          <CloseDocument aria-label="Cerrar usuarios"><Svg w={8} h={8}><path d="m.5.500 7 7M7.500.500l-7 7" stroke="#333" strokeWidth="1.500" /></Svg></CloseDocument>
        </DocumentTabs>
        <FormArea>
          <UserForm />
          <ScrollBar>
            <ScrollButton aria-label="Subir"><Svg w={7} h={4}><path d="M0 4h7L3.500 0z" fill="#777" /></Svg></ScrollButton>
            <ScrollTrack><ScrollThumb /></ScrollTrack>
            <ScrollButton aria-label="Bajar"><Svg w={7} h={4}><path d="M0 0h7L3.500 4z" fill="#777" /></Svg></ScrollButton>
          </ScrollBar>
        </FormArea>
        <RecordBar>
          <span>Registro:</span>
          <RecordButton aria-label="Primero"><Svg w={7} h={7}><path d="M0 0h1v7H0zM6 0v7L2 3.500z" fill="#333" /></Svg></RecordButton>
          <RecordButton aria-label="Anterior"><Svg w={4} h={7}><path d="M4 0v7L0 3.500z" fill="#aaa" /></Svg></RecordButton>
          <RecordNumber aria-label="Registro actual" defaultValue="1 de 24" />
          <RecordButton aria-label="Siguiente"><Svg w={4} h={7}><path d="M0 0v7l4-3.500z" fill="#333" /></Svg></RecordButton>
          <RecordButton aria-label="Último"><Svg w={7} h={7}><path d="M6 0h1v7H6zM1 0v7l4-3.500z" fill="#333" /></Svg></RecordButton>
          <RecordButton aria-label="Nuevo registro"><Svg w={13} h={8}><path d="M0 0v8l4-4z" fill="#333" /><path d="M6 1.500h7M6 4h7M6 6.500h7M7.500 0v8M9.500 0v8M11.500 0v8" stroke="#f0bf3c" /></Svg></RecordButton>
          <NoFilter><Svg w={15} h={14}><path d="M0 0h11v2L7 6v6H4V6L0 2z" fill="#b5b5b5" /><path d="m7 7 7 7M14 7l-7 7" stroke="#aaa" strokeWidth="1.500" /></Svg>Sin filtro</NoFilter>
          <RecordSearch aria-label="Buscar registro" defaultValue="Buscar" />
          <BarCorner />
        </RecordBar>
      </Documents>
    </Workspace>

    <StatusBar>
      <span>IDENTIFICAR USUARIOS</span>
      <NumLock>BLOQ NUM</NumLock>
      <ViewButton $active aria-label="Vista Formulario"><Svg w={14} h={13}><path d="M.5.500h13v12H.5zM0 2h14" stroke="#fff" /><path d="M0 0h14v4H0zM2 6h4v2H2zM8 6h4v2H8zM2 9h4v2H2zM8 9h4v2H8z" fill="#fff" /></Svg></ViewButton>
      <ViewButton aria-label="Vista Presentación"><Svg w={12} h={12}><path d="M0 .5h12M0 11.500h12M1.500 0v12M10.500 1v10M2 4.500h8M2 7.500h8" stroke="#fff" /></Svg></ViewButton>
      <ViewButton aria-label="Vista Diseño"><Svg w={14} h={13}><path d="M.5 0v7h6zM13 0 6 7M.5 9.500h13v3H.5zM4 10v2M7 10v2M10 10v2" stroke="#fff" strokeWidth="1.300" /></Svg></ViewButton>
    </StatusBar>

    <Taskbar>
      <StartButton aria-label="Inicio"><StartIcon /></StartButton>
      <TaskButton $open aria-label="Chrome"><ChromeIcon /></TaskButton>
      <TaskButton aria-label="Internet Explorer"><ExplorerIcon /></TaskButton>
      <TaskButton $open aria-label="Explorador de archivos"><FolderIcon /></TaskButton>
      <TaskButton aria-label="Firefox"><FirefoxIcon /></TaskButton>
      <TaskButton $open aria-label="Skype"><SkypeIcon /></TaskButton>
      <TaskButton $open $active aria-label="Access"><AccessAppIcon /></TaskButton>
      <TaskButton $open aria-label="Paint"><PaintIcon /></TaskButton>
      <Tray>
        {trayIcons.map((icon, i) => <Svg key={i} w={16} h={16}>{icon}</Svg>)}
      </Tray>
      <Clock><span>06:57 p. m.</span><span>18/03/2016</span></Clock>
    </Taskbar>
  </Window>
);

export default App;
